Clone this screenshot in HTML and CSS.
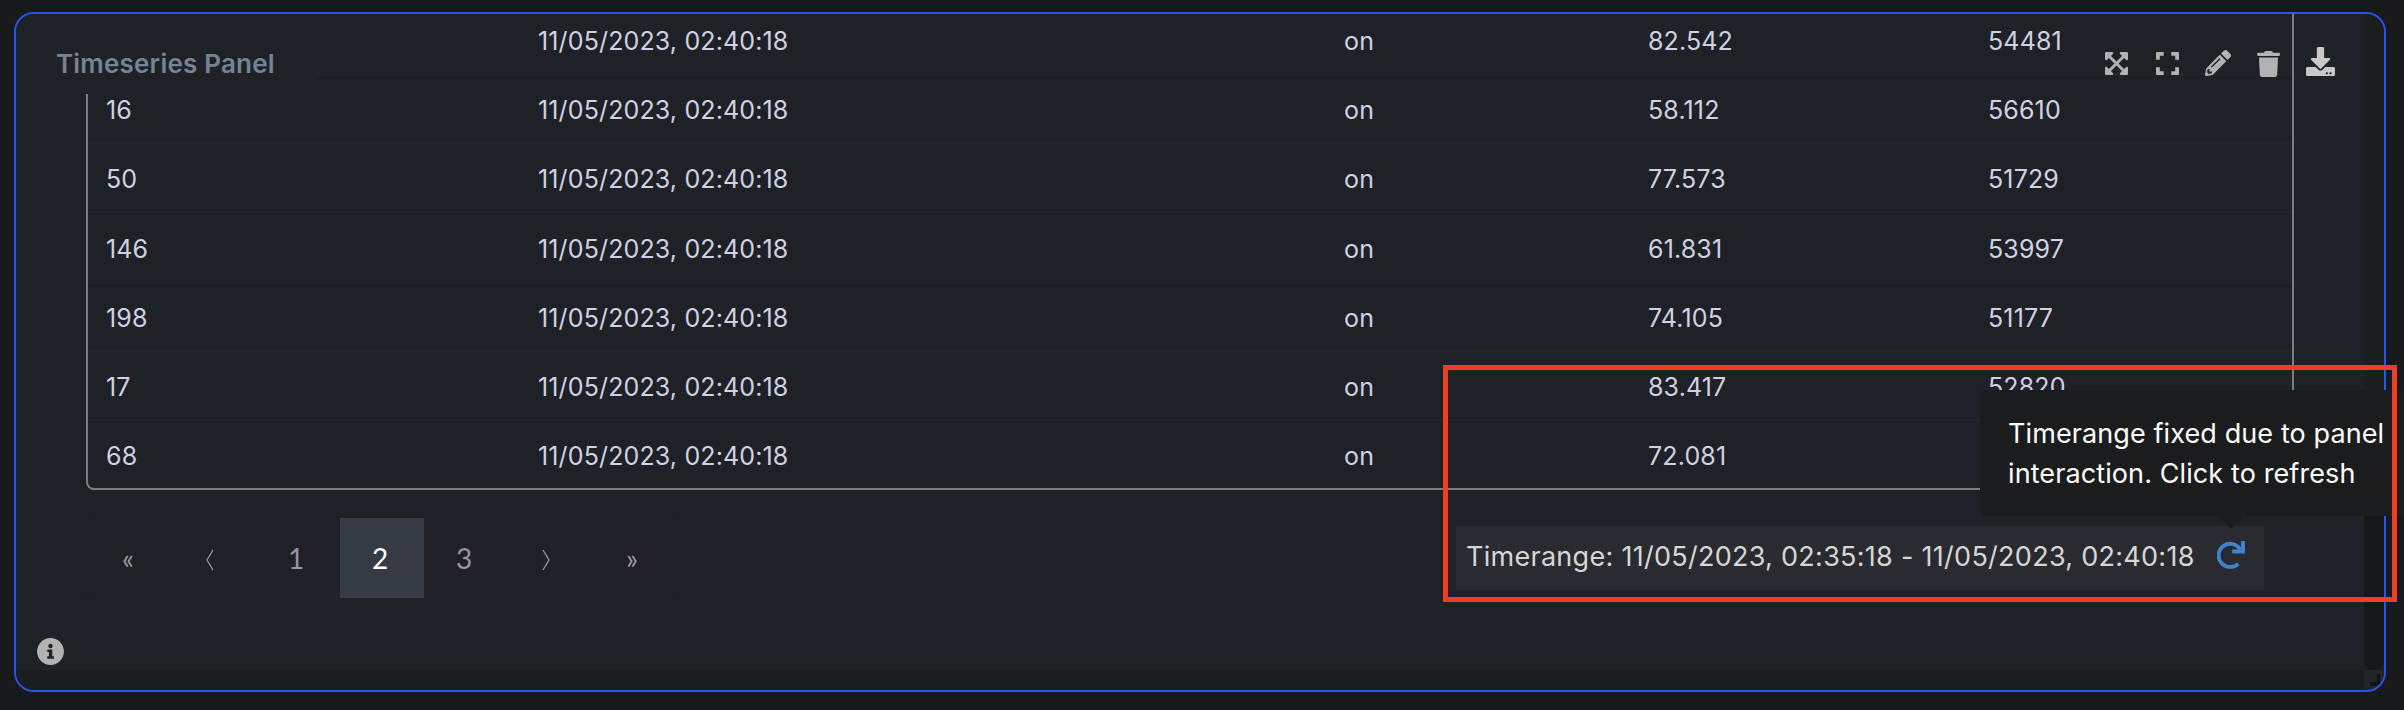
FILE: index.html
```html
<!DOCTYPE html>
<html lang="en">
<head>
<meta charset="utf-8">
<title>Timeseries Panel</title>
<link rel="stylesheet" href="styles.css">
</head>
<body>
<section class="panel">
  <div class="content">
    <div class="table">
      <div class="row"><span></span><span>11/05/2023, 02:40:18</span><span>on</span><span>82.542</span><span>54481</span></div>
      <div class="row"><span>16</span><span>11/05/2023, 02:40:18</span><span>on</span><span>58.112</span><span>56610</span></div>
      <div class="row"><span>50</span><span>11/05/2023, 02:40:18</span><span>on</span><span>77.573</span><span>51729</span></div>
      <div class="row"><span>146</span><span>11/05/2023, 02:40:18</span><span>on</span><span>61.831</span><span>53997</span></div>
      <div class="row"><span>198</span><span>11/05/2023, 02:40:18</span><span>on</span><span>74.105</span><span>51177</span></div>
      <div class="row"><span>17</span><span>11/05/2023, 02:40:18</span><span>on</span><span>83.417</span><span>52820</span></div>
      <div class="row"><span>68</span><span>11/05/2023, 02:40:18</span><span>on</span><span>72.081</span><span></span></div>
    </div>
    <div class="footer">
      <nav class="pages">
        <span>«</span>
        <span class="arrow"><svg width="8" height="22" viewBox="0 0 8 22"><path d="M7 1 1 11l6 10"/></svg></span>
        <span>1</span><span class="active">2</span><span>3</span>
        <span class="arrow"><svg width="8" height="22" viewBox="0 0 8 22"><path d="m1 1 6 10-6 10"/></svg></span>
        <span>»</span>
      </nav>
      <div class="timerange">
        <span class="range-text">Timerange: 11/05/2023, 02:35:18 - 11/05/2023, 02:40:18</span>
        <svg class="refresh" width="28" height="28" viewBox="0 0 28 28"><path d="M23.200 8.400A11.600 11.600 0 1 0 21.200 22.800" fill="none" stroke="#3f83cc" stroke-width="3.800"/><path d="M24 0h4v12.500H15.200v-4H24z" fill="#3f83cc"/></svg>
      </div>
    </div>
  </div>
  <div class="track-y"><div class="thumb"></div></div>
  <div class="track-x"></div>
  <div class="corner"><svg width="20" height="20"><path d="M13 4h3v12H6v-4h7z" fill="#111213"/></svg></div>
  <header class="title">Timeseries Panel</header>
  <div class="tools">
    <svg class="expand" width="23" height="23" viewBox="0 32 448 448"><path d="M448 344v112a24 24 0 0 1-24 24H312c-21.400 0-32.100-25.900-17-41l36.200-36.200L224 295.600 116.800 402.900 153 439c15.100 15.100 4.400 41-17 41H24a24 24 0 0 1-24-24V344c0-21.400 25.900-32.100 41-17l36.200 36.200L184.500 256 77.200 148.700 41 185c-15.100 15.100-41 4.400-41-17V56a24 24 0 0 1 24-24h112c21.400 0 32.100 25.900 17 41l-36.200 36.200L224 216.400l107.200-107.300L295 73c-15.100-15.100-4.400-41 17-41h112a24 24 0 0 1 24 24v112c0 21.400-25.900 32.100-41 17l-36.200-36.200L263.500 256l107.300 107.300L407 327.100c15.100-15.200 41-4.500 41 16.900z"/></svg>
    <svg class="full" width="23" height="23" viewBox="0 0 24 24"><path d="M1 0h7v4H4v4H0V1a1 1 0 0 1 1-1zM16 0h7a1 1 0 0 1 1 1v7h-4V4h-4zM0 16h4v4h4v4H1a1 1 0 0 1-1-1zM20 16h4v7a1 1 0 0 1-1 1h-7v-4h4z"/></svg>
    <svg class="pencil" width="26" height="26" viewBox="0 0 512 512"><path d="M497.900 142.100l-46.100 46.100c-4.700 4.700-12.300 4.700-17 0l-111-111c-4.700-4.700-4.700-12.300 0-17l46.100-46.100c18.700-18.700 49.100-18.700 67.900 0l60.100 60.100c18.800 18.700 18.800 49.100 0 67.900zM284.200 99.800L21.600 362.400.4 483.900c-2.900 16.400 11.400 30.600 27.800 27.800l121.500-21.300 262.600-262.600c4.700-4.700 4.700-12.300 0-17l-111-111c-4.800-4.700-12.400-4.700-17.100 0zM124.100 339.900c-5.500-5.500-5.500-14.300 0-19.800l154-154c5.500-5.500 14.300-5.500 19.800 0s5.500 14.300 0 19.800l-154 154c-5.500 5.500-14.300 5.500-19.800 0zM88 424h48v36.300l-64.500 11.300-31.100-31.100L51.700 376H88v48z"/></svg>
    <svg class="trash" width="23" height="26" viewBox="0 0 448 512"><path d="M432 32H312l-9.400-18.700A24 24 0 0 0 281.100 0H166.800a23.700 23.700 0 0 0-21.400 13.300L136 32H16A16 16 0 0 0 0 48v32a16 16 0 0 0 16 16h416a16 16 0 0 0 16-16V48a16 16 0 0 0-16-16zM36 128l17.200 339a48 48 0 0 0 47.900 45h245.800a48 48 0 0 0 47.900-45L412 128z"/></svg>
    <svg class="download" width="29" height="29" viewBox="0 0 512 512"><path d="M216 0h80c13.300 0 24 10.700 24 24v168h87.700c17.800 0 26.700 21.500 14.100 34.100L269.700 378.300c-7.500 7.500-19.800 7.500-27.300 0L90.100 226.100c-12.600-12.600-3.700-34.100 14.100-34.100H192V24c0-13.300 10.700-24 24-24zm296 376v112c0 13.300-10.700 24-24 24H24c-13.300 0-24-10.700-24-24V376c0-13.300 10.700-24 24-24h146.700l49 49c20.100 20.100 52.500 20.100 72.600 0l49-49H488c13.300 0 24 10.700 24 24zm-124 88c0-11-9-20-20-20s-20 9-20 20 9 20 20 20 20-9 20-20zm64 0c0-11-9-20-20-20s-20 9-20 20 9 20 20 20 20-9 20-20z"/></svg>
  </div>
  <svg class="info" width="27" height="27" viewBox="0 0 27 27"><circle cx="13.500" cy="13.500" r="13.400" fill="#b2b2b2"/><path d="M13.500 5.800a2.200 2.200 0 1 1 0 4.400 2.200 2.200 0 0 1 0-4.400zM10.300 11.500h5v6.700h1.600v2.600h-6.600v-2.600h1.600v-4.100h-1.600z" fill="#1e2126"/></svg>
</section>
<div class="tooltip">Timerange fixed due to panel<br>interaction. Click to refresh</div>
<div class="highlight"></div>
</body>
</html>
```
FILE: styles.css
```css
* { box-sizing: border-box; }
body {
  margin: 0;
  width: 2404px;
  height: 710px;
  padding: 12px 18px 18px 14px;
  overflow: hidden;
  position: relative;
  background: #18191d;
  font-family: Inter, "Liberation Sans", sans-serif;
}
.panel {
  position: relative;
  height: 680px;
  border: 2px solid #2358ea;
  border-radius: 20px;
  background: #1e2126;
  overflow: hidden;
}
.content { padding: 0 90px 0 70px; }
.table {
  border: 2px solid #7c7d7e;
  border-top: 0;
  border-radius: 0 0 8px 8px;
  height: 476px;
  display: flex;
  flex-direction: column;
  justify-content: flex-end;
}
.row {
  flex: none;
  height: 69.200px;
  display: grid;
  grid-template-columns: 432px 806px 304px 340px 1fr;
  align-items: center;
  padding-left: 18px;
  padding-top: 3px;
  border-bottom: 2px solid #222529;
  color: #d0d1e3;
  font-size: 25px;
  letter-spacing: 0.140px;
}
.row:last-child { height: 67px; border-bottom: 0; }
.footer { display: flex; justify-content: space-between; margin-top: 26px; padding-right: 30px; }
.pages {
  display: flex;
  padding: 2px;
  height: 84px;
  border-radius: 8px;
  background: #202126;
  color: #9595a3;
  font-family: Lato, sans-serif;
  font-size: 28px;
}
.pages span { width: 84px; display: flex; align-items: center; justify-content: center; padding-right: 4px; }
.pages .arrow { padding-right: 9px; padding-top: 4px; }
.pages .active { background: #363a43; color: #fff; }
.pages svg { fill: none; stroke: #9595a3; stroke-width: 1.3; }
.timerange {
  display: flex;
  align-items: center;
  justify-content: space-between;
  width: 808px;
  height: 64px;
  margin-top: 10px;
  padding: 0 19px 4px 10px;
  background: #2a2b30;
  color: #d6d6d6;
  font-size: 27px;
  letter-spacing: 0.280px;
  white-space: nowrap;
}
.refresh { margin-bottom: 2px; }
.track-y { position: absolute; right: 0; top: 0; width: 20px; height: 656px; background: #1a1e1f; }
.thumb { height: 200px; margin-top: 456px; border-radius: 10px; background: #161718; }
.track-x { position: absolute; left: 0; right: 20px; bottom: 0; height: 20px; background: #1a1e1f; }
.corner { position: absolute; right: 0; bottom: 0; width: 20px; height: 20px; background: #232528; }
.corner svg { display: block; }
.title {
  position: absolute;
  left: 0;
  top: 0;
  width: 300px;
  height: 80px;
  padding: 34px 0 0 40px;
  background: #1e2126;
  color: #758493;
  font-size: 26px;
  line-height: 32px;
  font-weight: 600;
  letter-spacing: 0.200px;
}
.tools { position: absolute; left: 2089px; top: 30px; height: 38px; display: flex; align-items: center; fill: #b2b2b2; }
.tools .expand { margin-right: 28px; }
.tools .full { margin-right: 26px; }
.tools .pencil { margin-right: 26px; }
.tools .trash { margin-right: 26px; margin-top: 1px; }
.tools .download { fill: #c8c8c8; margin-top: -3px; }
.info { position: absolute; left: 21px; top: 624px; }
.tooltip {
  position: absolute;
  left: 1980px;
  top: 390px;
  width: 424px;
  height: 126px;
  padding: 24px 0 0 28px;
  border-radius: 6px 0 0 6px;
  background: #1b1c1d;
  color: #fff;
  font-size: 27px;
  letter-spacing: 0.100px;
  line-height: 40px;
  white-space: nowrap;
}
.tooltip::after {
  content: "";
  position: absolute;
  left: 238px;
  top: 126px;
  border: 13px solid transparent;
  border-top-color: #1b1c1d;
  border-bottom: 0;
}
.highlight { position: absolute; left: 1443px; top: 365px; width: 954px; height: 237px; border: 5px solid #ed3f24; }
```
